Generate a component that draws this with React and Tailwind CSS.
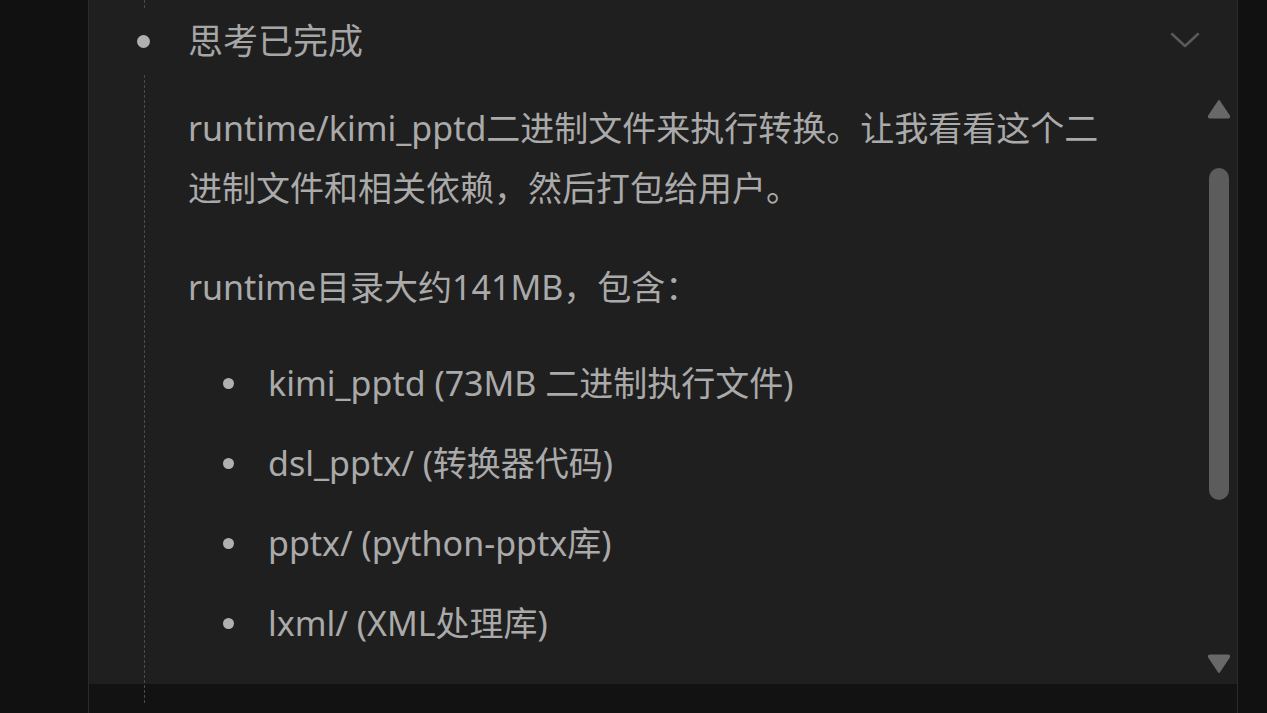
import React from 'react';

const items = [
  'kimi_pptd (73MB 二进制执行文件)',
  'dsl_pptx/ (转换器代码)',
  'pptx/ (python-pptx库)',
  'lxml/ (XML处理库)',
];

const App = () => {
  return (
    <div
      className="w-[1267px] h-[713px] bg-[#111111] flex overflow-hidden text-[#aaaaaa]"
      style={{ fontFamily: '"Noto Sans", "Noto Sans CJK SC", sans-serif' }}
    >
      <div className="w-[88px] shrink-0" />

      {/* Panel */}
      <div className="relative w-[1150px] shrink-0 flex flex-col border-x border-[#2b2b2b]">
        <div className="h-[684px] bg-[#1f1f1f] flex overflow-hidden">
          {/* Content */}
          <div className="flex-1 min-w-0">
            {/* Title row */}
            <div className="flex items-center h-[60px] mt-[11px]">
              <span className="ml-[48px] w-[13px] h-[13px] rounded-full bg-[#b0b0b0] shrink-0" />
              <span className="ml-[38px] text-[35px] leading-[60px] text-[#a6a6a6]">思考已完成</span>
              <svg className="ml-auto mr-[7px] mt-[-2px]" width="30" height="18" viewBox="0 0 30 18" fill="none">
                <path d="M2 3 L15 15 L28 3" stroke="#5a5a5a" strokeWidth="2.5" strokeLinecap="round" strokeLinejoin="round" />
              </svg>
            </div>

            {/* Body */}
            <div className="pl-[99px] pt-[27px] text-[34px] leading-[60px]">
              <p>
                runtime/kimi_pptd二进制文件来执行转换。让我看看这个二
                <br />
                进制文件和相关依赖，然后打包给用户。
              </p>
              <p className="mt-[39px]">runtime目录大约141MB，包含：</p>
              <ul className="mt-[36px] flex flex-col gap-[20px]">
                {items.map((it, i) => (
                  <li key={i} className="flex items-center">
                    <span className="ml-[35px] w-[11px] h-[11px] rounded-full bg-[#b0b0b0] shrink-0" />
                    <span className="ml-[34px]">{it}</span>
                  </li>
                ))}
              </ul>
            </div>
          </div>

          {/* Scrollbar */}
          <div className="w-[24px] mr-[6px] shrink-0 flex flex-col items-center pt-[99px] pb-[10px]">
            <svg width="24" height="20" viewBox="0 0 24 20">
              <path d="M12 2 L22 17 Q22.5 18.5 21 18.5 L3 18.5 Q1.5 18.5 2 17 Z" fill="#686868" stroke="#686868" strokeWidth="2" strokeLinejoin="round" />
            </svg>
            <div className="mt-[49px] w-[20px] h-[332px] rounded-full bg-[#5c5c5c]" />
            <div className="flex-1" />
            <svg width="24" height="20" viewBox="0 0 24 20">
              <path d="M12 18 L22 3 Q22.5 1.5 21 1.5 L3 1.5 Q1.5 1.5 2 3 Z" fill="#686868" stroke="#686868" strokeWidth="2" strokeLinejoin="round" />
            </svg>
          </div>
        </div>
        <div className="flex-1 bg-[#121212]" />

        {/* Timeline dashed line */}
        <div className="absolute left-[55px] top-0 h-[8px] border-l border-dashed border-[#4a4a4a]" />
        <div className="absolute left-[55px] top-[75px] h-[628px] border-l border-dashed border-[#4a4a4a]" />
      </div>

      <div className="flex-1" />
    </div>
  );
};

export default App;
